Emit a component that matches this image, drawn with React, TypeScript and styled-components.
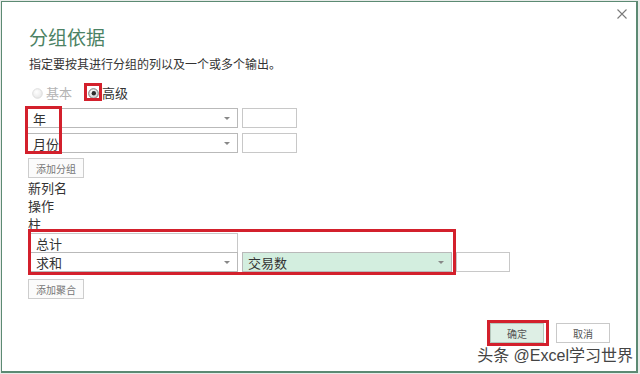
import React from "react";
import styled, { createGlobalStyle } from "styled-components";

const Global = createGlobalStyle`
  html, body { margin: 0; padding: 0; }
  body {
    background: #e8ebe9;
    font-family: "Noto Sans CJK SC", "Noto Sans", sans-serif;
    color: #3c3c3c;
  }
`;

const Dialog = styled.div`
  box-sizing: border-box;
  position: relative;
  margin: 1px 0 0 1px;
  width: 637px;
  height: 372px;
  background: #fff;
  border: 1px solid #5c8a73;
  border-right-width: 2px;
  border-bottom-width: 2px;
  display: flex;
  flex-direction: column;
  padding: 0 26px 28px 25px;
`;

const Header = styled.div`
  height: 23px;
  display: flex;
  justify-content: flex-end;
  align-items: flex-start;
`;

const Close = styled.svg`
  margin-top: 7px;
  margin-right: -17px;
  width: 10px;
  height: 10px;
`;

const Title = styled.h1`
  margin: 0;
  font-size: 19px;
  line-height: 24px;
  font-weight: 400;
  color: #4c8264;
  padding-left: 2px;
`;

const Subtitle = styled.p`
  margin: 7px 0 0 2px;
  font-size: 12px;
  line-height: 16px;
  color: #333;
`;

const RadioGroup = styled.div`
  margin-top: 13px;
  height: 16px;
  display: flex;
  align-items: center;
  gap: 16px;
  padding-left: 5px;
`;

const RadioOption = styled.label<{ $disabled?: boolean }>`
  position: relative;
  display: flex;
  align-items: center;
  gap: 3px;
  font-size: 13px;
  line-height: 16px;
  color: ${(p) => (p.$disabled ? "#b4b4b4" : "#333")};
`;

const Annotation = styled.div<{ $top: number; $left: number; $w: number; $h: number }>`
  position: absolute;
  box-sizing: border-box;
  top: ${(p) => p.$top}px;
  left: ${(p) => p.$left}px;
  width: ${(p) => p.$w}px;
  height: ${(p) => p.$h}px;
  border: 3px solid #d3202c;
  pointer-events: none;
`;

const FieldBlock = styled.div`
  position: relative;
  margin-top: 7px;
  display: flex;
  flex-direction: column;
  gap: 5px;
`;

const Row = styled.div`
  display: flex;
  gap: 4px;
`;

const Select = styled.div<{ $w: number; $bg?: string }>`
  box-sizing: border-box;
  width: ${(p) => p.$w}px;
  height: 20px;
  border: 1px solid #b9b9b9;
  background: ${(p) => p.$bg || "#fff"};
  display: flex;
  align-items: center;
  justify-content: space-between;
  padding: 0 7px 0 5px;
  font-size: 13px;
  color: #333;
`;

const Arrow = styled.span`
  width: 0;
  height: 0;
  border-left: 3px solid transparent;
  border-right: 3px solid transparent;
  border-top: 3px solid #888;
  margin-top: 1px;
`;

const Input = styled.div<{ $w: number }>`
  box-sizing: border-box;
  width: ${(p) => p.$w}px;
  height: 20px;
  border: 1px solid #c8c8c8;
  background: #fff;
  display: flex;
  align-items: center;
  padding-left: 5px;
  font-size: 13px;
  color: #333;
`;

const SmallButton = styled.button<{ $mt: number }>`
  box-sizing: border-box;
  margin: ${(p) => p.$mt}px 0 0 1px;
  width: 56px;
  height: 20px;
  padding: 0;
  border: 1px solid #cdcdcd;
  background: #fbfbfb;
  font-family: inherit;
  font-size: 10px;
  color: #777;
  align-self: flex-start;
`;

const Labels = styled.div`
  margin: 1px 0 0 1px;
  display: flex;
  flex-direction: column;
`;

const Label = styled.div`
  height: 18px;
  line-height: 18px;
  font-size: 13px;
  color: #333;
`;

const AggBlock = styled.div`
  position: relative;
  margin-left: 3px;
  display: flex;
  flex-direction: column;
  align-items: flex-start;
`;

const AggRow = styled.div`
  display: flex;
  gap: 4px;
  margin-top: -1px;
`;

const Footer = styled.div`
  margin-top: auto;
  display: flex;
  justify-content: flex-end;
  gap: 12px;
`;

const ActionButton = styled.button<{ $primary?: boolean }>`
  position: relative;
  box-sizing: border-box;
  width: 54px;
  height: 20px;
  padding: 0;
  border: 1px solid ${(p) => (p.$primary ? "#b5c7bc" : "#c9c9c9")};
  background: ${(p) => (p.$primary ? "#deefe5" : "#fff")};
  font-family: inherit;
  font-size: 10px;
  color: #555;
`;

const Watermark = styled.div`
  position: absolute;
  right: 3px;
  bottom: 5px;
  font-family: "Liberation Sans", "Noto Sans CJK SC", sans-serif;
  font-size: 16px;
  line-height: 20px;
  color: #444;
  text-shadow: 0 0 2px #fff, 0 0 2px #fff, 1px 1px 0 #fff, -1px -1px 0 #fff;
  white-space: nowrap;
`;

const RadioIcon = ({ checked, disabled }: { checked?: boolean; disabled?: boolean }) => (
  <svg width="11" height="11" viewBox="0 0 11 11">
    <defs>
      <radialGradient id={checked ? "rg1" : "rg0"} cx="0.4" cy="0.35" r="0.7">
        <stop offset="0" stopColor="#ffffff" />
        <stop offset="1" stopColor={disabled ? "#e6e6e6" : "#c9ccd0"} />
      </radialGradient>
    </defs>
    <circle
      cx="5.5"
      cy="5.5"
      r="4.8"
      fill={`url(#${checked ? "rg1" : "rg0"})`}
      stroke={disabled ? "#dadada" : "#6f6f6f"}
      strokeWidth="0.9"
    />
    {checked && <circle cx="5.8" cy="5.2" r="2.2" fill="#2c2c2c" />}
  </svg>
);

export default function App() {
  return (
    <>
      <Global />
      <Dialog>
        <Header>
          <Close viewBox="0 0 10 10">
            <path d="M0.5 0.5 L9.5 9.5 M9.5 0.5 L0.5 9.5" stroke="#7a7a7a" strokeWidth="1.1" fill="none" />
          </Close>
        </Header>
        <Title>分组依据</Title>
        <Subtitle>指定要按其进行分组的列以及一个或多个输出。</Subtitle>
        <RadioGroup>
          <RadioOption $disabled>
            <RadioIcon disabled />
            基本
          </RadioOption>
          <RadioOption>
            <RadioIcon checked />
            高级
            <Annotation $top={-2} $left={-4} $w={18} $h={18} />
          </RadioOption>
        </RadioGroup>
        <FieldBlock>
          <Row>
            <Select $w={211}>
              年<Arrow />
            </Select>
            <Input $w={55} />
          </Row>
          <Row>
            <Select $w={211}>
              月份<Arrow />
            </Select>
            <Input $w={55} />
          </Row>
          <Annotation $top={-2} $left={-2} $w={37} $h={48} />
        </FieldBlock>
        <SmallButton $mt={5}>添加分组</SmallButton>
        <Labels>
          <Label>新列名</Label>
          <Label>操作</Label>
          <Label>柱</Label>
        </Labels>
        <AggBlock>
          <Input $w={208}>总计</Input>
          <AggRow>
            <Select $w={208}>
              求和<Arrow />
            </Select>
            <Select $w={210} $bg="#d3eedf">
              交易数<Arrow />
            </Select>
            <Input $w={54} />
          </AggRow>
          <Annotation $top={-4} $left={-2} $w={428} $h={46} />
        </AggBlock>
        <SmallButton $mt={7}>添加聚合</SmallButton>
        <Footer>
          <ActionButton $primary>
            确定
            <Annotation $top={-4} $left={-4} $w={62} $h={26} />
          </ActionButton>
          <ActionButton>取消</ActionButton>
        </Footer>
        <Watermark>头条 @Excel学习世界</Watermark>
      </Dialog>
    </>
  );
}
